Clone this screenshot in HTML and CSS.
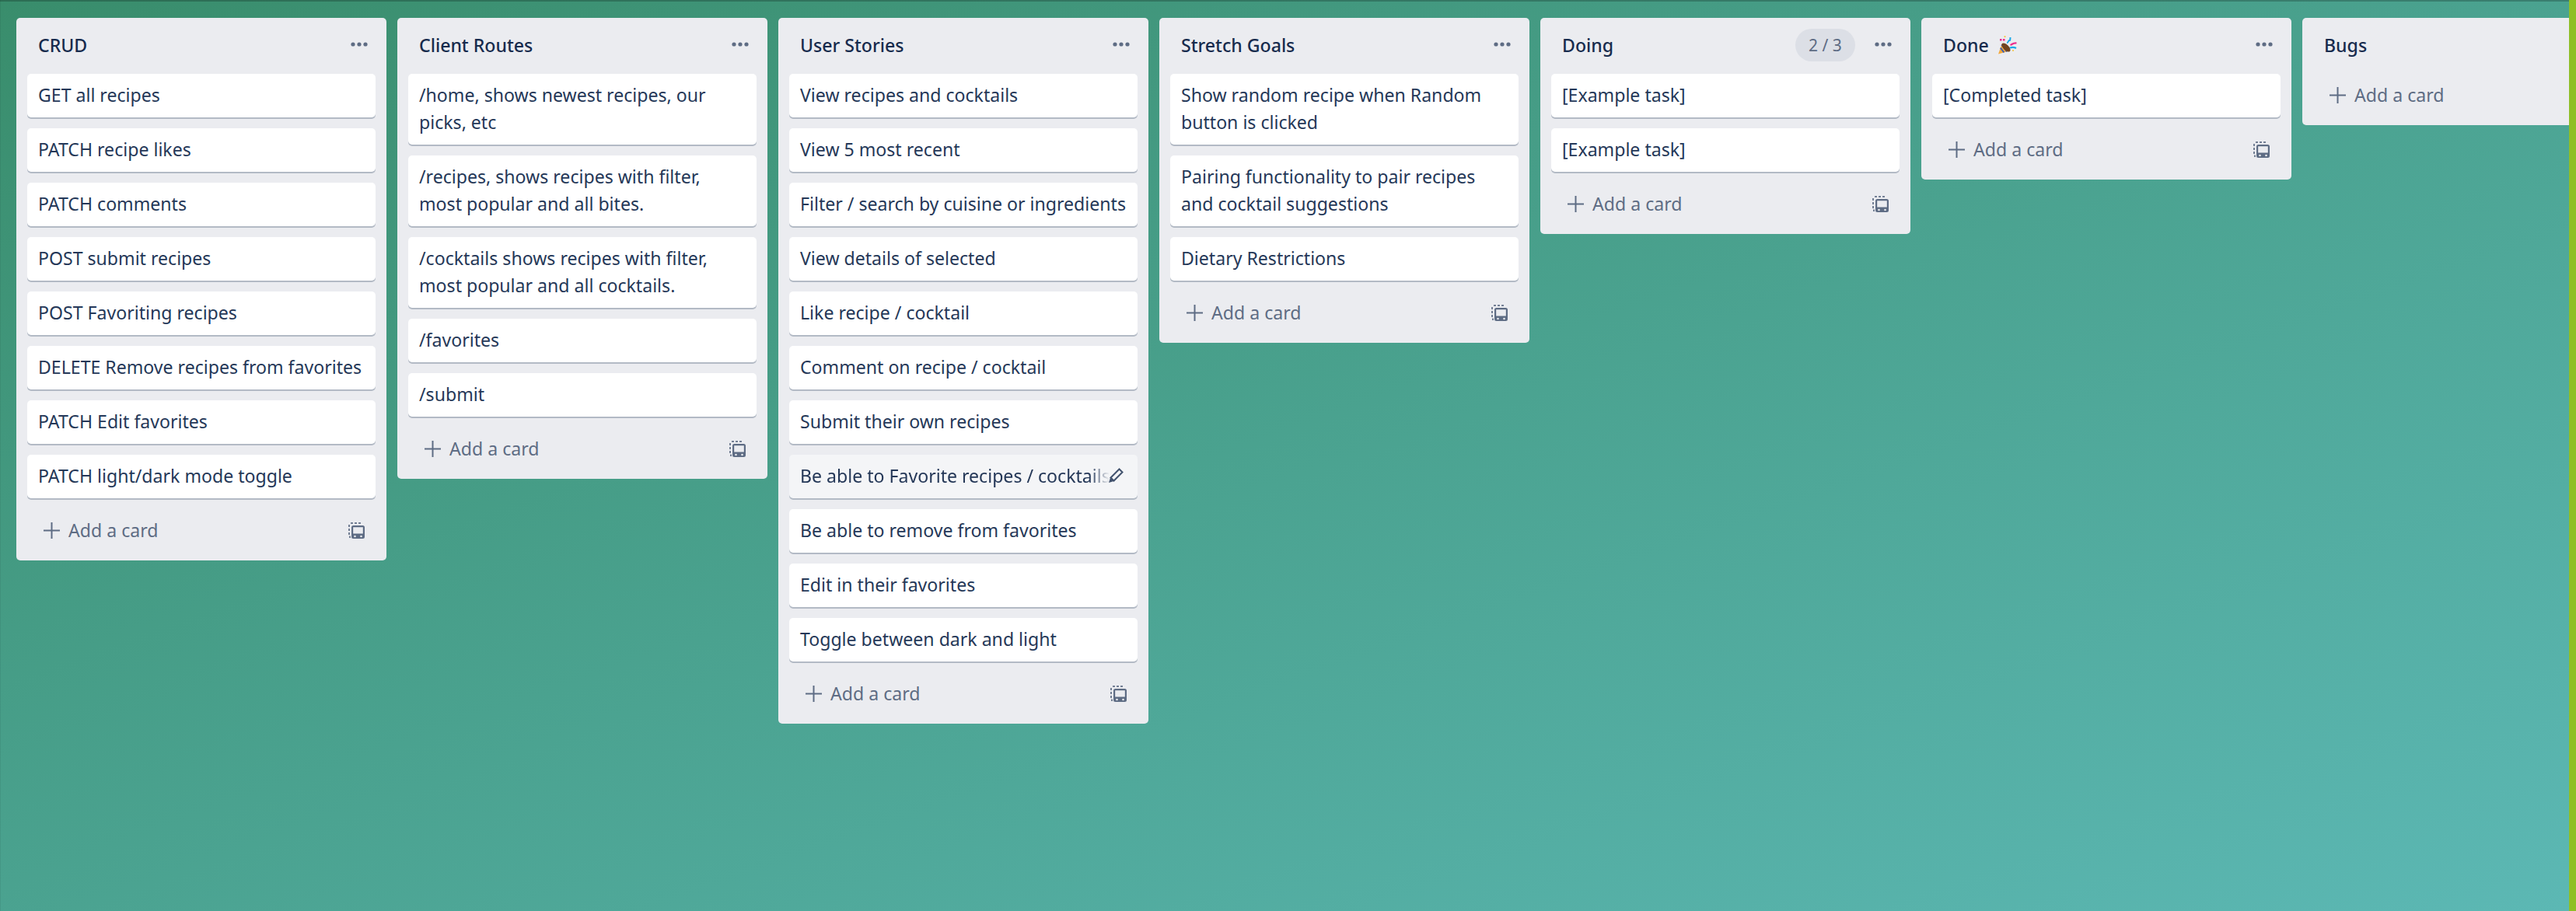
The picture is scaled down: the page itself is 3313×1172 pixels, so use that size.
FILE: index.html
```html
<!DOCTYPE html>
<html lang="en">
<head>
	<meta charset="UTF-8">
	<title>Board</title>
	<link rel="stylesheet" href="styles.css">
</head>
<body>
	<svg class="defs" width="0" height="0">
		<symbol id="dots" viewBox="0 0 22 6"><circle cx="3" cy="3" r="2.6"/><circle cx="11" cy="3" r="2.6"/><circle cx="19" cy="3" r="2.6"/></symbol>
		<symbol id="plus" viewBox="0 0 21 21"><path d="M9.500 0h2v9.500H21v2h-9.500V21h-2v-9.500H0v-2h9.500z"/></symbol>
		<symbol id="tpl" viewBox="0 0 21 21">
			<path d="M3 0h3v2H3zM8 0h3v2H8zM13 0h3v2h-3zM0 3h2v3H0zM0 8h2v3H0zM0 13h2v3H0zM1 17.500h2V20H1z" opacity=".85"/>
			<path fill-rule="evenodd" d="M6.500 4h12A2.500 2.500 0 0 1 21 6.500v12a2.500 2.500 0 0 1-2.500 2.500h-12A2.500 2.500 0 0 1 4 18.500v-12A2.500 2.500 0 0 1 6.500 4zM6.200 6.200v8.300h12.600V6.200zM8.500 16.700a1.300 1.300 0 1 0 0 2.600a1.300 1.300 0 1 0 0-2.600zM16.500 16.700a1.300 1.300 0 1 0 0 2.600a1.300 1.300 0 1 0 0-2.600z"/>
		</symbol>
	</svg>
	<div class="board">
		<div class="list">
			<div class="head"><span class="title">CRUD</span><svg class="dots"><use href="#dots"/></svg></div>
			<div class="card">GET all recipes</div>
			<div class="card">PATCH recipe likes</div>
			<div class="card">PATCH comments</div>
			<div class="card">POST submit recipes</div>
			<div class="card">POST Favoriting recipes</div>
			<div class="card">DELETE Remove recipes from favorites</div>
			<div class="card">PATCH Edit favorites</div>
			<div class="card">PATCH light/dark mode toggle</div>
			<div class="add"><svg class="plus"><use href="#plus"/></svg><span>Add a card</span><svg class="tpl"><use href="#tpl"/></svg></div>
		</div>
		<div class="list">
			<div class="head"><span class="title">Client Routes</span><svg class="dots"><use href="#dots"/></svg></div>
			<div class="card">/home, shows newest recipes, our picks, etc</div>
			<div class="card">/recipes, shows recipes with filter, most popular and all bites.</div>
			<div class="card">/cocktails shows recipes with filter, most popular and all cocktails.</div>
			<div class="card">/favorites</div>
			<div class="card">/submit</div>
			<div class="add"><svg class="plus"><use href="#plus"/></svg><span>Add a card</span><svg class="tpl"><use href="#tpl"/></svg></div>
		</div>
		<div class="list">
			<div class="head"><span class="title">User Stories</span><svg class="dots"><use href="#dots"/></svg></div>
			<div class="card">View recipes and cocktails</div>
			<div class="card">View 5 most recent</div>
			<div class="card">Filter / search by cuisine or ingredients</div>
			<div class="card">View details of selected</div>
			<div class="card">Like recipe / cocktail</div>
			<div class="card">Comment on recipe / cocktail</div>
			<div class="card">Submit their own recipes</div>
			<div class="card hover">
				<span class="fade">Be able to Favorite recipes / cocktails</span>
				<svg class="pen" viewBox="0 0 20 20"><path d="M14.500 1.500l4 4L7.500 16.500l-4-4z" fill="#f4f5f7" stroke="#42526e" stroke-width="2"/><path d="M3 12.500L1 19l6.500-2z" fill="#42526e"/></svg>
			</div>
			<div class="card">Be able to remove from favorites</div>
			<div class="card">Edit in their favorites</div>
			<div class="card">Toggle between dark and light</div>
			<div class="add"><svg class="plus"><use href="#plus"/></svg><span>Add a card</span><svg class="tpl"><use href="#tpl"/></svg></div>
		</div>
		<div class="list">
			<div class="head"><span class="title">Stretch Goals</span><svg class="dots"><use href="#dots"/></svg></div>
			<div class="card">Show random recipe when Random button is clicked</div>
			<div class="card">Pairing functionality to pair recipes and cocktail suggestions</div>
			<div class="card">Dietary Restrictions</div>
			<div class="add"><svg class="plus"><use href="#plus"/></svg><span>Add a card</span><svg class="tpl"><use href="#tpl"/></svg></div>
		</div>
		<div class="list">
			<div class="head"><span class="title">Doing</span><span class="limit">2 / 3</span><svg class="dots"><use href="#dots"/></svg></div>
			<div class="card">[Example task]</div>
			<div class="card">[Example task]</div>
			<div class="add"><svg class="plus"><use href="#plus"/></svg><span>Add a card</span><svg class="tpl"><use href="#tpl"/></svg></div>
		</div>
		<div class="list">
			<div class="head"><span class="title">Done</span>
				<svg class="party" viewBox="0 0 25 24">
					<path d="M1 23.500L6 9.500l9.500 10z" fill="#f4a93a"/>
					<path d="M3.800 15.500l4.500 6M5.200 11.500l7 9" stroke="#3b5fb5" stroke-width="2"/>
					<ellipse cx="11" cy="15" rx="7" ry="3.500" transform="rotate(45 11 15)" fill="#70431f"/>
					<rect x="3" y="4" width="2.500" height="2.500" fill="#ee2b8c"/>
					<rect x="7" y="4" width="2.500" height="2.500" fill="#ee2b8c"/>
					<path d="M12 9c2.500 0 1.500-3 3-3s1 1 1.500-4" fill="none" stroke="#18a8e8" stroke-width="2"/>
					<path d="M16.500 12c3-1 3-3 8-2.500" fill="none" stroke="#ee2b8c" stroke-width="2.200"/>
					<path d="M16 15.500c3-1.200 5-1.200 8 .500" fill="none" stroke="#18a8e8" stroke-width="2.200"/>
					<circle cx="9.500" cy="1.200" r="1.100" fill="#f6c445"/>
					<circle cx="20" cy="19" r="1.100" fill="#f6c445"/>
				</svg>
				<svg class="dots"><use href="#dots"/></svg></div>
			<div class="card">[Completed task]</div>
			<div class="add"><svg class="plus"><use href="#plus"/></svg><span>Add a card</span><svg class="tpl"><use href="#tpl"/></svg></div>
		</div>
		<div class="list">
			<div class="head"><span class="title">Bugs</span></div>
			<div class="add"><svg class="plus"><use href="#plus"/></svg><span>Add a card</span></div>
		</div>
	</div>
	<div class="bar"></div>
</body>
</html>
```

FILE: styles.css
```css
*{
	margin:0px;
	padding:0px;
	box-sizing:border-box;
}
html,body{
	height:100%;
	overflow:hidden;
}
body{
	background:linear-gradient(to bottom right,#398d6c,#5cb8b4);
	box-shadow:inset 0 2px rgba(0,0,0,.22),inset 1px 0 rgba(0,0,0,.06);
	font-family:"Noto Sans","Liberation Sans",sans-serif;
	font-size:23.1px;
	line-height:35px;
	color:#253858;
	display:flex;
}
.defs{
	display:none;
}
.board{
	flex:1;
	display:flex;
	align-items:flex-start;
	gap:14px;
	padding:23px 0 0 21px;
	overflow:hidden;
}
.bar{
	width:9px;
	background:#8ebf26;
}
.list{
	flex:none;
	width:476px;
	padding:0 14px;
	background:#ebecf0;
	border-radius:5px;
}
.head{
	height:72px;
	display:flex;
	align-items:center;
	padding-left:14px;
	padding-right:10px;
	padding-bottom:2px;
}
.title{
	font-weight:500;
	color:#172b4d;
}
.dots{
	width:22px;
	height:6px;
	margin-left:auto;
	margin-bottom:3px;
	fill:#5e6c84;
}
.limit{
	margin-left:auto;
	margin-right:25px;
	width:77px;
	height:42px;
	line-height:42px;
	text-align:center;
	background:#dcdfe6;
	border-radius:21px;
	color:#5e6c84;
	font-size:21px;
}
.limit + .dots{
	margin-left:0;
}
.party{
	width:25px;
	height:24px;
	margin-left:11px;
}
.card{
	position:relative;
	background:#fff;
	border-radius:5px;
	box-shadow:0 2px 0 #b3bac5;
	padding:10px 14px 11px;
	margin-bottom:14px;
}
.hover{
	background:#f4f5f7;
}
.fade{
	display:block;
	white-space:nowrap;
	-webkit-mask-image:linear-gradient(to right,#000 372px,transparent 398px);
	mask-image:linear-gradient(to right,#000 372px,transparent 398px);
}
.pen{
	position:absolute;
	top:17px;
	right:18px;
	width:20px;
	height:20px;
}
.add{
	height:66px;
	display:flex;
	align-items:center;
	padding:0 14px 12px 21px;
	color:#5e6c84;
}
.plus{
	width:21px;
	height:21px;
	fill:#5e6c84;
	margin-right:11px;
}
.tpl{
	width:21px;
	height:21px;
	margin-left:auto;
	fill:#5e6c84;
}
```
